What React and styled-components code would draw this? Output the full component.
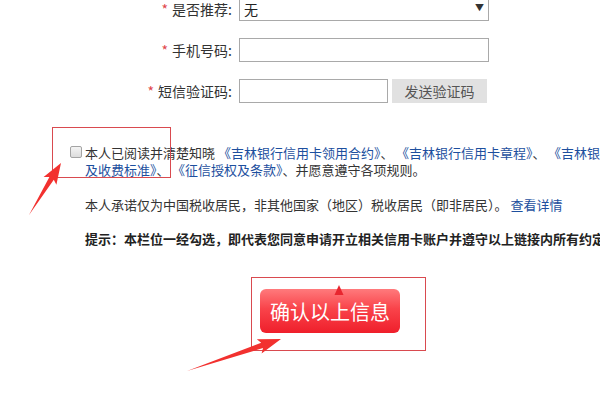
import React from 'react';
import styled, { createGlobalStyle } from 'styled-components';

const GlobalStyle = createGlobalStyle`
  html, body {
    margin: 0;
    padding: 0;
    background: #fff;
    overflow: hidden;
  }
  body {
    width: 600px;
    height: 401px;
    font-family: "Noto Sans CJK SC", "Noto Sans", sans-serif;
    color: #333;
  }
`;

const Page = styled.div`
  position: relative;
  width: 600px;
  height: 401px;
  overflow: hidden;
`;

const Form = styled.div`
  display: flex;
  flex-direction: column;
  gap: 17px;
  margin-top: -3px;
`;

const Row = styled.div`
  display: flex;
  align-items: center;
  height: 24px;
  gap: 7px;
`;

const Label = styled.label`
  width: 232px;
  text-align: right;
  font-size: 14px;
  line-height: 24px;
  color: #333;
  white-space: nowrap;
`;

const Star = styled.span`
  color: #e0474c;
  margin-right: 4px;
`;

const SelectBox = styled.div`
  box-sizing: border-box;
  width: 250px;
  height: 24px;
  border: 1px solid #a9a9a9;
  display: flex;
  align-items: center;
  justify-content: space-between;
  padding: 0 4px 0 4px;
  font-size: 14px;
  color: #222;
`;

const Caret = styled.span`
  font-size: 9px;
  color: #333;
  margin-top: -4px;
`;

const Input = styled.input`
  box-sizing: border-box;
  width: ${({ w }) => w}px;
  height: 24px;
  border: 1px solid #a9a9a9;
  padding: 0 4px;
  margin: 0;
  font-size: 14px;
  outline: none;
`;

const SendButton = styled.button`
  width: 95px;
  height: 24px;
  margin-left: -3px;
  border: none;
  background: #e1e1e1;
  color: #555;
  font-family: inherit;
  font-size: 14px;
  padding: 0;
`;

const Agreement = styled.div`
  display: flex;
  align-items: flex-start;
  gap: 3px;
  margin: 41px 0 0 70px;
`;

const Check = styled.input`
  appearance: none;
  box-sizing: border-box;
  width: 12px;
  height: 12px;
  margin: 1.5px 0 0;
  border: 1px solid #a4a4a4;
  border-radius: 2px;
  background: linear-gradient(#f4f4f4, #dcdcdc);
  flex: none;
`;

const Text = styled.div`
  font-size: 13px;
  line-height: 17px;
  white-space: nowrap;
  color: ${({ bold }) => (bold ? '#222' : '#333')};
  font-weight: ${({ bold }) => (bold ? 700 : 400)};
  margin: ${({ top }) => top || 0}px 0 0 ${({ indent }) => indent || 0}px;
`;

const Link = styled.a`
  color: #1d4f9e;
  text-decoration: none;
`;

const Sep = styled.span`
  margin-right: 9px;
`;

const Confirm = styled.button`
  display: block;
  width: 140px;
  height: 44px;
  margin: 42px 0 0 260px;
  border: none;
  border-radius: 6px;
  background: linear-gradient(#ff7a7c 0%, #f9434a 45%, #ef1f2b 100%);
  color: #fff;
  font-family: inherit;
  font-size: 20px;
  padding: 0;
`;

const MarkBox = styled.div`
  position: absolute;
  left: ${({ x }) => x}px;
  top: ${({ y }) => y}px;
  width: ${({ w }) => w}px;
  height: ${({ h }) => h}px;
  border: 1px solid #d94a4f;
  box-sizing: border-box;
  pointer-events: none;
`;

const Overlay = styled.svg`
  position: absolute;
  left: 0;
  top: 0;
  pointer-events: none;
`;

function arrowPoints([tx, ty], [px, py], head = 18, shaft = 3, barb = 7.5) {
  const len = Math.hypot(px - tx, py - ty);
  const dx = (px - tx) / len;
  const dy = (py - ty) / len;
  const nx = -dy;
  const ny = dx;
  const bx = px - dx * head;
  const by = py - dy * head;
  const kx = px - dx * (head + 3);
  const ky = py - dy * (head + 3);
  const pts = [
    [tx, ty],
    [bx + nx * shaft, by + ny * shaft],
    [kx + nx * barb, ky + ny * barb],
    [px, py],
    [kx - nx * barb, ky - ny * barb],
    [bx - nx * shaft, by - ny * shaft],
  ];
  return pts.map((p) => p.map((v) => v.toFixed(1)).join(',')).join(' ');
}

export default function App() {
  return (
    <Page>
      <GlobalStyle />
      <Form>
        <Row>
          <Label><Star>*</Star>是否推荐:</Label>
          <SelectBox>
            <span>无</span>
            <Caret>▼</Caret>
          </SelectBox>
        </Row>
        <Row>
          <Label><Star>*</Star>手机号码:</Label>
          <Input w={250} />
        </Row>
        <Row>
          <Label><Star>*</Star>短信验证码:</Label>
          <Input w={149} />
          <SendButton>发送验证码</SendButton>
        </Row>
      </Form>

      <Agreement>
        <Check type="checkbox" />
        <div>
          <Text>
            本人已阅读并清楚知晓 <Link>《吉林银行信用卡领用合约》</Link><Sep>、</Sep><Link>《吉林银行信用卡章程》</Link><Sep>、</Sep><Link>《吉林银行信用卡透支利率</Link>
          </Text>
          <Text>
            <Link>及收费标准》</Link><Sep>、</Sep><Link>《征信授权及条款》</Link>、并愿意遵守各项规则。
          </Text>
        </div>
      </Agreement>
      <Text top={18} indent={85}>
        本人承诺仅为中国税收居民，非其他国家（地区）税收居民（即非居民）。 <Link>查看详情</Link>
      </Text>
      <Text bold top={17} indent={85}>
        提示：本栏位一经勾选，即代表您同意申请开立相关信用卡账户并遵守以上链接内所有约定和规则。
      </Text>

      <Confirm>确认以上信息</Confirm>

      <MarkBox x={52} y={127} w={119} h={51} />
      <MarkBox x={251} y={277} w={175} h={74} />

      <Overlay width="600" height="401">
        <polygon points="339,285 334.5,295 343.5,295" fill="#e8262f" />
        <polygon points={arrowPoints([29, 215], [61, 163], 18, 2.6, 7.5)} fill="#f2312f" />
        <polygon points={arrowPoints([187, 371], [281, 339], 20, 2.8, 7.5)} fill="#f2312f" />
      </Overlay>
    </Page>
  );
}
